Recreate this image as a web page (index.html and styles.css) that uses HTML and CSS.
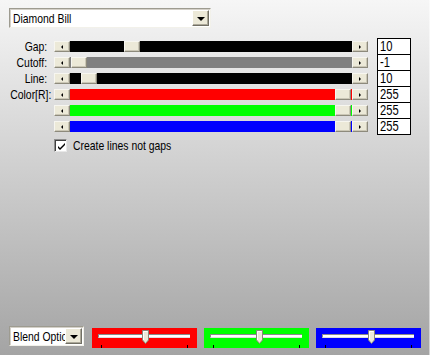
FILE: index.html
```html
<!DOCTYPE html>
<html>
<head>
<meta charset="utf-8">
<link rel="stylesheet" href="styles.css">
</head>
<body>
<div class="panel">
  <div class="combo combo-top">
    <span class="combo-text"><span class="nt">Diamond Bill</span></span>
    <span class="combo-btn"><i class="down"></i></span>
  </div>

  <div class="sliders">
    <span class="lbl"><span class="nr">Gap:</span></span>
    <div class="sb"><span class="btn"><i class="la"></i></span><div class="track c-black"><span class="thumb" style="margin-left:54px"></span></div><span class="btn"><i class="ra"></i></span></div>
    <span class="val"><span class="nt">10</span></span>

    <span class="lbl"><span class="nr">Cutoff:</span></span>
    <div class="sb"><span class="btn"><i class="la"></i></span><div class="track c-gray"><span class="thumb" style="margin-left:1px"></span></div><span class="btn"><i class="ra"></i></span></div>
    <span class="val"><span class="nt">-1</span></span>

    <span class="lbl"><span class="nr">Line:</span></span>
    <div class="sb"><span class="btn"><i class="la"></i></span><div class="track c-black"><span class="thumb" style="margin-left:11px"></span></div><span class="btn"><i class="ra"></i></span></div>
    <span class="val"><span class="nt">10</span></span>

    <span class="lbl"><span class="nr">Color[R]:</span></span>
    <div class="sb"><span class="btn"><i class="la"></i></span><div class="track c-red"><span class="thumb" style="margin-left:265px"></span></div><span class="btn"><i class="ra"></i></span></div>
    <span class="val"><span class="nt">255</span></span>

    <span class="lbl"></span>
    <div class="sb"><span class="btn"><i class="la"></i></span><div class="track c-green"><span class="thumb" style="margin-left:265px"></span></div><span class="btn"><i class="ra"></i></span></div>
    <span class="val"><span class="nt">255</span></span>

    <span class="lbl"></span>
    <div class="sb"><span class="btn"><i class="la"></i></span><div class="track c-blue"><span class="thumb" style="margin-left:265px"></span></div><span class="btn"><i class="ra"></i></span></div>
    <span class="val last"><span class="nt">255</span></span>
  </div>

  <label class="check">
    <span class="box"><svg width="9" height="9" viewBox="0 0 9 9"><path d="M1 4 L3 6 L8 1 L8 3 L3 8 L1 6 Z" fill="#000"/></svg></span>
    <span class="check-text"><span class="nt">Create lines not gaps</span></span>
  </label>

  <div class="bottom">
    <div class="combo combo-blend">
      <span class="combo-text"><span class="nt">Blend Options</span></span>
      <span class="combo-btn"><i class="down"></i></span>
    </div>
    <div class="tb c-red">
      <div class="tb-line"></div>
      <svg class="tb-thumb" style="left:50px" width="7" height="14" viewBox="0 0 7 14"><path d="M0.5 0.5 H6.5 V10 L3.5 13.5 L0.5 10 Z" fill="#ece9d8" stroke="#8a8778" stroke-width="1"/><path d="M1.5 10 V1.5 H5.5" fill="none" stroke="#fff" stroke-width="1"/></svg>
      <span class="tick" style="left:9px"></span><span class="tick" style="left:95px"></span>
    </div>
    <div class="tb c-green">
      <div class="tb-line"></div>
      <svg class="tb-thumb" style="left:52px" width="7" height="14" viewBox="0 0 7 14"><path d="M0.5 0.5 H6.5 V10 L3.5 13.5 L0.5 10 Z" fill="#ece9d8" stroke="#8a8778" stroke-width="1"/><path d="M1.5 10 V1.5 H5.5" fill="none" stroke="#fff" stroke-width="1"/></svg>
      <span class="tick" style="left:9px"></span><span class="tick" style="left:95px"></span>
    </div>
    <div class="tb c-blue">
      <div class="tb-line"></div>
      <svg class="tb-thumb" style="left:52px" width="7" height="14" viewBox="0 0 7 14"><path d="M0.5 0.5 H6.5 V10 L3.5 13.5 L0.5 10 Z" fill="#ece9d8" stroke="#8a8778" stroke-width="1"/><path d="M1.5 10 V1.5 H5.5" fill="none" stroke="#fff" stroke-width="1"/></svg>
      <span class="tick" style="left:9px"></span><span class="tick" style="left:95px"></span>
    </div>
  </div>
</div>
</body>
</html>
```

FILE: styles.css
```css
* { box-sizing: border-box; }
html, body { margin: 0; padding: 0; }
body {
  width: 430px;
  height: 355px;
  overflow: hidden;
  font-family: "Liberation Sans", Arial, sans-serif;
  font-size: 13px;
  color: #000;
}
.panel {
  width: 430px;
  height: 355px;
  display: flex;
  flex-direction: column;
  background: linear-gradient(to bottom, #f6f6f6 0%, #a4a4a4 100%);
  box-shadow: inset -1px 0 0 rgba(255,255,255,0.5);
}

/* condensed text: scaled horizontally to mimic the narrow UI face */
.nt, .nr {
  display: inline-block;
  white-space: nowrap;
  transform: scaleX(0.8);
}
.nt { transform-origin: left center; }
.nr { transform-origin: right center; }

/* combo boxes */
.combo {
  display: flex;
  align-items: stretch;
  background: #fff;
  border: 1px solid;
  border-color: #9d9b90 #f2f1ea #f2f1ea #9d9b90;
  box-shadow: inset 1px 1px 0 #d4d0c8;
  overflow: hidden;
}
.combo-top {
  margin: 8px 0 0 9px;
  width: 202px;
  height: 20px;
}
.combo-text {
  flex: 1;
  padding: 2px 0 0 3px;
  line-height: 15px;
  white-space: nowrap;
  overflow: hidden;
}
.combo-btn {
  width: 17px;
  margin: 1px 1px 1px 0;
  background: #ece9d8;
  border: 1px solid;
  border-color: #fff #716f64 #716f64 #fff;
  box-shadow: inset -1px -1px 0 #aca899;
  display: flex;
  align-items: center;
  justify-content: center;
}
.down {
  width: 0; height: 0;
  border-left: 4px solid transparent;
  border-right: 4px solid transparent;
  border-top: 4px solid #000;
  margin-top: 1px;
}

/* slider grid */
.sliders {
  margin-top: 10px;
  display: grid;
  grid-template-columns: 47px 314px 36px;
  grid-auto-rows: 16px;
  column-gap: 7px;
  align-items: center;
}
.lbl {
  text-align: right;
  line-height: 16px;
  white-space: nowrap;
  padding-top: 1px;
}
.sb {
  display: flex;
  height: 11px;
  margin-top: 1px;
}
.btn, .thumb {
  flex: none;
  width: 16px;
  height: 11px;
  background: #ece9d8;
  border: 1px solid;
  border-color: #f7f6f0 #8d8a7c #8d8a7c #f7f6f0;
  box-shadow: inset -1px -1px 0 #cbc7b6;
  display: flex;
  align-items: center;
  justify-content: center;
}
.la {
  width: 0; height: 0;
  border-right: 2px solid #000;
  border-top: 2px solid transparent;
  border-bottom: 2px solid transparent;
}
.ra {
  width: 0; height: 0;
  border-left: 2px solid #000;
  border-top: 2px solid transparent;
  border-bottom: 2px solid transparent;
}
.track {
  flex: 1;
  display: flex;
}
.c-black { background: #000; }
.c-gray { background: #808080; }
.c-red { background: #ff0000; }
.c-green { background: #00ff00; }
.c-blue { background: #0000ff; }

.val {
  margin-left: 2px;
  height: 16px;
  background: #fff;
  border: 1px solid #000;
  border-bottom: none;
  padding-left: 2px;
  line-height: 15px;
  font-size: 14px;
  overflow: hidden;
}
.val.last { border-bottom: 1px solid #000; height: 17px; }

/* checkbox */
.check {
  display: flex;
  align-items: center;
  margin: 5px 0 0 54px;
  height: 13px;
}
.box {
  width: 13px;
  height: 13px;
  background: #fff;
  border: 1px solid;
  border-color: #8d8d8d #e8e8e8 #e8e8e8 #8d8d8d;
  box-shadow: inset 1px 1px 0 #404040;
  display: flex;
  align-items: center;
  justify-content: center;
  padding: 1px 0 0 1px;
}
.box svg { display: block; }
.check-text {
  margin-left: 6px;
  line-height: 13px;
}

/* bottom row */
.bottom {
  margin-top: auto;
  padding: 0 0 7px 9px;
  display: flex;
  align-items: flex-start;
  gap: 7px;
}
.combo-blend {
  width: 75px;
  height: 20px;
  margin-right: 1px;
}
.tb {
  position: relative;
  width: 105px;
  height: 20px;
  margin-top: 2px;
}
.tb-line {
  position: absolute;
  left: 6px;
  right: 7px;
  top: 6px;
  height: 4px;
  background: #fff;
  border-top: 1px solid #8a8a8a;
  border-left: 1px solid #8a8a8a;
  border-bottom: 1px solid #e0e0e0;
}
.tb-thumb {
  position: absolute;
  top: 2px;
  display: block;
}
.tick {
  position: absolute;
  top: 17px;
  width: 1px;
  height: 3px;
  background: #000;
}
```
